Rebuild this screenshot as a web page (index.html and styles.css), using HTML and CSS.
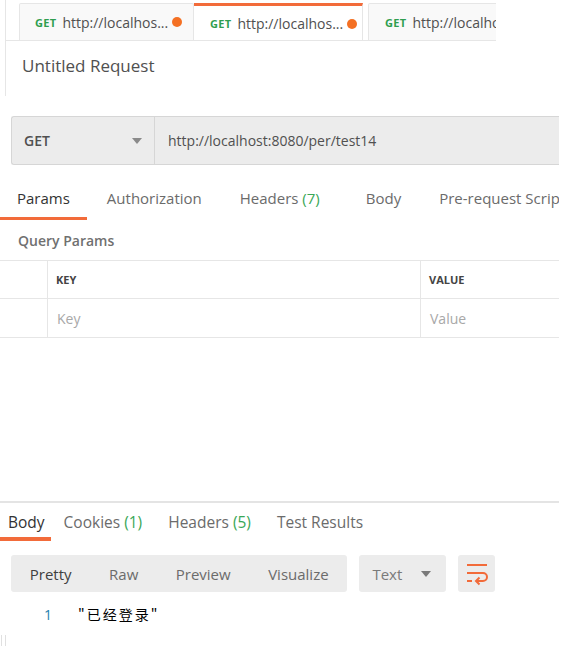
FILE: index.html
```html
<!DOCTYPE html>
<html lang="zh">
<head>
<meta charset="utf-8">
<title>Untitled Request</title>
<link rel="stylesheet" href="styles.css">
</head>
<body>
<div class="app">
  <div class="top">
    <div class="tabbar">
      <div class="rtab">
        <span class="method">GET</span><span class="rurl">http://localhos...</span><span class="dot"></span>
      </div>
      <div class="rtab active">
        <span class="method">GET</span><span class="rurl">http://localhos...</span><span class="dot"></span>
      </div>
      <div class="rtab last">
        <span class="method">GET</span><span class="rurl">http://localhost:8080/per/test14</span>
      </div>
    </div>
    <div class="title">Untitled Request</div>
  </div>

  <div class="urlbar">
    <div class="mselect">
      <span>GET</span>
      <span class="caret"></span>
    </div>
    <div class="urlinput">http://localhost:8080/per/test14</div>
  </div>

  <div class="reqtabs">
    <div class="reqtab active">Params</div>
    <div class="reqtab t-auth">Authorization</div>
    <div class="reqtab t-head">Headers <span class="count">(7)</span></div>
    <div class="reqtab t-body">Body</div>
    <div class="reqtab t-pre">Pre-request Script</div>
  </div>

  <div class="qp">Query Params</div>
  <div class="ptable">
    <div class="prow head">
      <div class="c0"></div>
      <div class="c1">KEY</div>
      <div class="c2">VALUE</div>
    </div>
    <div class="prow">
      <div class="c0"></div>
      <div class="c1 ph">Key</div>
      <div class="c2 ph">Value</div>
    </div>
  </div>

  <div class="response">
    <div class="restabs">
      <div class="restab first active">Body</div>
      <div class="restab">Cookies <span class="count">(1)</span></div>
      <div class="restab">Headers <span class="count">(5)</span></div>
      <div class="restab">Test Results</div>
    </div>
    <div class="toolbar">
      <div class="seg">
        <div class="segbtn active">Pretty</div>
        <div class="segbtn">Raw</div>
        <div class="segbtn">Preview</div>
        <div class="segbtn">Visualize</div>
      </div>
      <div class="fmt"><span>Text</span><span class="caret"></span></div>
      <div class="wrapbtn">
        <svg width="24" height="24" viewBox="0 0 24 24" fill="none" stroke="#f26b3a" stroke-width="2" stroke-linecap="butt">
          <path d="M2 3H22"/>
          <path d="M2 11H18a4 4 0 0 1 0 8H11"/>
          <path d="M14.5 15.5L11 19L14.5 22.5"/>
          <path d="M2 19H7"/>
        </svg>
      </div>
    </div>
    <div class="code">
      <span class="ln">1</span><span class="str">"已经登录"</span>
    </div>
    <div class="marks"><span></span><span></span></div>
  </div>
</div>
</body>
</html>
```

FILE: styles.css
```css
* { box-sizing: border-box; }
html, body { margin: 0; padding: 0; background: #fff; }
body {
  font-family: "Open Sans", "Noto Sans", "Noto Sans CJK SC", sans-serif;
  color: #505050;
  width: 568px;
  height: 662px;
  overflow: hidden;
}
.app { width: 559px; }

/* top request tabs */
.top {
  margin-left: 5px;
  border-left: 1px solid #e6e6e6;
  height: 96px;
}
.tabbar {
  width: 490px;
  height: 41px;
  padding-top: 3px;
  padding-left: 13px;
  display: flex;
  align-items: stretch;
  border-bottom: 1px solid #e6e6e6;
  overflow: hidden;
}
.rtab {
  flex: none;
  display: flex;
  align-items: center;
  height: 37px;
  padding: 0 10px 0 15px;
  background: #f9f9f9;
  border: 1px solid #e6e6e6;
  border-bottom: none;
  border-radius: 2px 2px 0 0;
  width: 175px;
  white-space: nowrap;
}
.rtab.active {
  width: 169px;
  height: 38px;
  background: #fff;
  border: none;
  border-top: 3px solid #f26b3a;
  border-right: 1px solid #e6e6e6;
  border-radius: 0;
  padding-left: 16px;
  padding-right: 4px;
}
.rtab.last { margin-left: 5px; width: 160px; padding-left: 16px; }
.method {
  flex: none;
  font-size: 11px;
  font-weight: 700;
  color: #2f9e4f;
  letter-spacing: 0.3px;
  margin-right: 6px;
}
.rurl { flex: none; font-size: 14px; color: #505050; }
.dot {
  flex: none;
  width: 10px; height: 10px;
  border-radius: 50%;
  background: #f47023;
  margin-left: 4px;
}
.title {
  padding: 13px 0 0 16px;
  font-size: 17px;
  color: #505050;
  line-height: 24px;
}

/* url bar */
.urlbar {
  margin: 20px 0 0 11px;
  height: 49px;
  display: flex;
  background: #ececec;
  border-top: 1px solid #d6d6d6;
  border-bottom: 1px solid #d6d6d6;
  border-left: 1px solid #d6d6d6;
  border-radius: 3px 0 0 3px;
}
.mselect {
  width: 143px;
  display: flex;
  align-items: center;
  justify-content: space-between;
  padding: 0 12px 0 12px;
  border-right: 1px solid #d6d6d6;
  font-size: 14px;
  font-weight: 600;
  color: #505050;
}
.caret {
  width: 0; height: 0;
  border-left: 5px solid transparent;
  border-right: 5px solid transparent;
  border-top: 6px solid #8a8a8a;
}
.urlinput {
  display: flex;
  align-items: center;
  padding-left: 13px;
  font-size: 14px;
  color: #505050;
}

/* request tabs */
.reqtabs {
  display: flex;
  margin-top: 17px;
  height: 38px;
  white-space: nowrap;
  overflow: hidden;
}
.reqtab {
  flex: none;
  padding: 4px 17px 0;
  font-size: 15px;
  color: #6b6b6b;
  border-bottom: 3px solid transparent;
  line-height: 24px;
}
.reqtab.active { color: #333; border-bottom-color: #f26b3a; }
.reqtab.t-auth { padding-left: 20px; }
.reqtab.t-head { padding-left: 21px; }
.reqtab.t-body { padding-left: 29px; }
.reqtab.t-pre { padding-left: 21px; }
.count { color: #3aa757; }

.qp {
  padding: 11px 0 0 18px;
  font-size: 14px;
  font-weight: 600;
  color: #707070;
  line-height: 20px;
  height: 40px;
}

/* table */
.ptable { border-top: 1px solid #e6e6e6; }
.prow {
  display: flex;
  height: 39px;
  border-bottom: 1px solid #e6e6e6;
}
.prow.head { height: 38px; }
.c0 { width: 48px; border-right: 1px solid #e6e6e6; }
.c1 {
  width: 373px;
  border-right: 1px solid #e6e6e6;
  display: flex; align-items: center;
  padding-left: 8px;
}
.c2 {
  flex: 1;
  display: flex; align-items: center;
  padding-left: 8px;
}
.head .c1, .head .c2 {
  font-size: 11px;
  font-weight: 700;
  color: #444;
}
.ph { font-size: 14px; color: #a8a8a8; padding-left: 9px; }

/* response */
.response {
  margin-top: 163px;
  border-top: 2px solid #e4e4e4;
}
.restabs {
  display: flex;
  height: 38px;
  white-space: nowrap;
}
.restab {
  flex: none;
  padding: 7px 13px 0;
  font-size: 15.5px;
  line-height: 24px;
  color: #6b6b6b;
  border-bottom: 4px solid transparent;
}
.restab.first { padding-left: 8px; padding-right: 6px; }
.restab.active { color: #333; border-bottom-color: #f26b3a; }

.toolbar {
  display: flex;
  gap: 12px;
  margin: 14px 0 0 11px;
  height: 37px;
}
.seg {
  display: flex;
  background: #ececec;
  border-radius: 3px;
}
.segbtn {
  display: flex;
  align-items: center;
  padding: 0 18.75px;
  font-size: 15px;
  color: #6b6b6b;
}
.segbtn.active { color: #404040; }
.fmt {
  width: 87px;
  display: flex;
  align-items: center;
  justify-content: space-between;
  padding: 0 15px 0 13px;
  background: #ececec;
  border-radius: 3px;
  font-size: 15px;
  color: #7a7a7a;
}
.fmt .caret { border-top-color: #7a7a7a; }
.wrapbtn {
  width: 37px;
  display: flex;
  align-items: center;
  justify-content: center;
  background: #ececec;
  border-radius: 3px;
}

.code {
  display: flex;
  align-items: center;
  height: 22px;
  margin-top: 11px;
  font-size: 14px;
}
.ln {
  width: 78px;
  padding-left: 44px;
  color: #1d7fae;
  font-family: "Open Sans", sans-serif;
}
.str {
  font-family: "Noto Sans CJK SC", "Noto Sans", sans-serif;
  color: #000;
  letter-spacing: 2px;
}
.marks {
  display: flex;
  gap: 3px;
  margin-top: 10px;
  padding-left: 1px;
}
.marks span {
  width: 1px;
  height: 11px;
  background: #e0e0e0;
}
```
